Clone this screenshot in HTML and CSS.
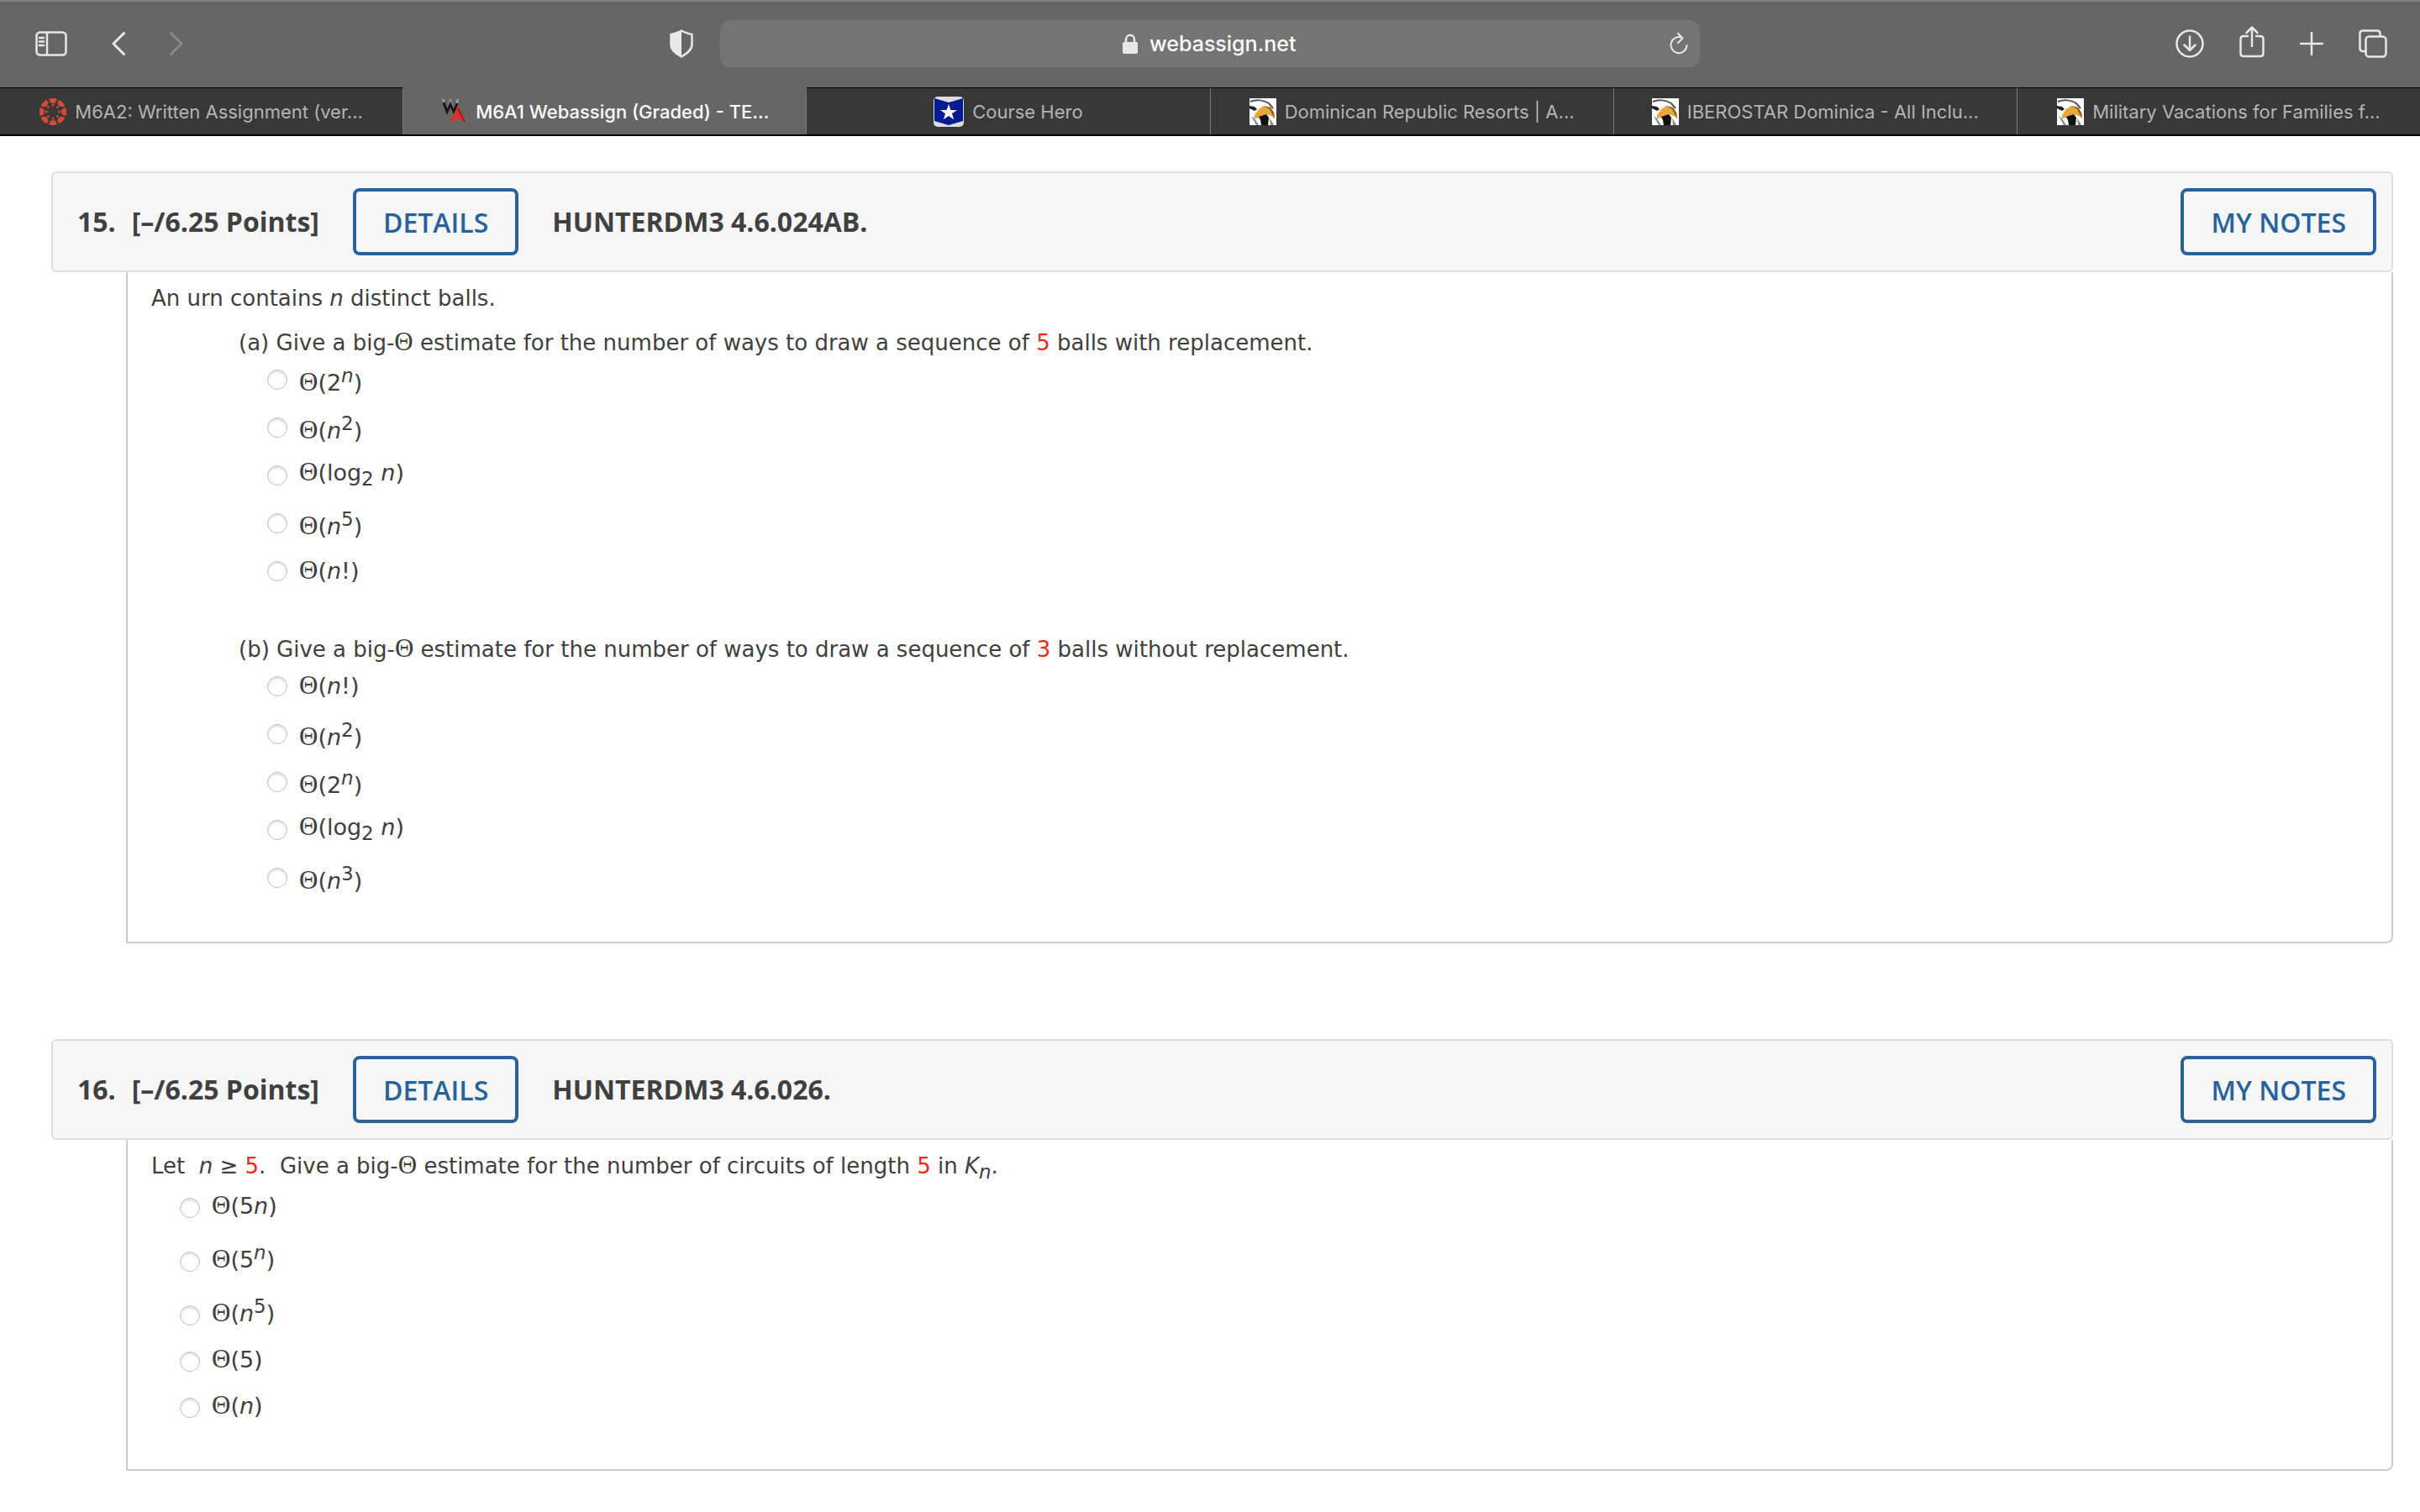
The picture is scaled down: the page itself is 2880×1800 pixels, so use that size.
FILE: index.html
```
<!DOCTYPE html>
<html lang="en">
<head>
    <meta charset="UTF-8">
    <meta name="viewport" content="width=device-width, initial-scale=1.0">
    <title>M6A1 Webassign (Graded)</title>
    <link rel="stylesheet" href="styles.css">
</head>
<body>
    <!-- Shared favicon for the three travel tabs -->
    <svg width="0" height="0" class="defs" aria-hidden="true">
        <symbol id="eagle" viewBox="0 0 32 32">
            <rect width="32" height="32" fill="#fff"/>
            <path d="M1 4C8 1 17 2 23 6L28 12" fill="none" stroke="#555" stroke-width="2"/>
            <path d="M0 9l6 1 3 3-3 2-6-3z" fill="#222"/>
            <path d="M6 20l5-7 6-4 8 2 4 6 1 7-4-3-6-2-8 4-6 1z" fill="#e9a63c"/>
            <path d="M17 9l8 2 4 6 1 7-3-5-3-6z" fill="#8a5f25"/>
            <path d="M11 22l9-3 3 4-1 9H14l-1-6z" fill="#111"/>
            <path d="M2 21l4 3 5 8H8zM24 24l3 4 2 4h-4z" fill="#8c8c8c"/>
        </symbol>
    </svg>

    <header class="browser">
        <div class="toolbar">
            <div class="tools tools-left">
                <button class="icon" aria-label="Sidebar">
                    <svg width="38" height="30" viewBox="0 0 38 30"><rect x="1.5" y="1.5" width="35" height="27" rx="4"/><path d="M14 2v26M5 8h5M5 12.500h5M5 17h5"/></svg>
                </button>
                <button class="icon" aria-label="Back">
                    <svg width="16" height="28" viewBox="0 0 16 28"><path d="M14.500 1.500L2 14l12.500 12.500" stroke-width="3"/></svg>
                </button>
                <button class="icon icon-off" aria-label="Forward" disabled>
                    <svg width="16" height="28" viewBox="0 0 16 28"><path d="M1.500 1.500L14 14 1.500 26.500"/></svg>
                </button>
                <button class="icon icon-shield" aria-label="Privacy report">
                    <svg width="28" height="34" viewBox="0 0 28 34"><path d="M14 1.500C18 4 22 5 26.500 6v12c0 6-5 10-12.500 14.500C6.500 28 1.500 24 1.500 18V6C6 5 10 4 14 1.500z"/><path class="solid" d="M14 1v32C6 29 1 24 1 18V6c5-1 9-2 13-5z"/></svg>
                </button>
            </div>
            <div class="address">
                <label class="url">
                    <svg width="18" height="24" viewBox="0 0 18 24"><rect class="solid" x="0" y="10" width="18" height="14" rx="2"/><path d="M4 11V7c0-7 10-7 10 0v4"/></svg>
                    <input type="text" value="webassign.net" aria-label="Address">
                </label>
                <button class="icon icon-reload" aria-label="Reload">
                    <svg width="22" height="26" viewBox="0 0 22 26"><path d="M15 6A9.500 9.500 0 1 0 20.500 15M10 1l5.500 5.500-5.500 5.500" stroke-width="2"/></svg>
                </button>
            </div>
            <div class="tools tools-right">
                <button class="icon" aria-label="Downloads">
                    <svg width="34" height="34" viewBox="0 0 34 34"><circle cx="17" cy="17" r="15.500"/><path d="M17 8.500v16M10.500 18.500l6.500 6.500 6.500-6.500"/></svg>
                </button>
                <button class="icon icon-share" aria-label="Share">
                    <svg width="30" height="38" viewBox="0 0 30 38"><path d="M10 12H5q-3.500 0-3.500 3.500v17Q1.500 36 5 36h20q3.500 0 3.500-3.500v-17Q28.500 12 25 12h-5M15 2v22M8.500 8L15 1.500 21.500 8"/></svg>
                </button>
                <button class="icon" aria-label="New tab">
                    <svg width="28" height="28" viewBox="0 0 28 28"><path d="M14 1v26M1 14h26"/></svg>
                </button>
                <button class="icon" aria-label="Tab overview">
                    <svg width="34" height="34" viewBox="0 0 34 34"><path d="M8.500 26H5q-3.500 0-3.500-3.500V5Q1.500 1.500 5 1.500h17q3.500 0 3.500 3.500v3"/><rect x="8.500" y="8.500" width="24" height="24" rx="4"/></svg>
                </button>
            </div>
        </div>

        <nav class="tabs">
            <a class="tab" href="#">
                <svg width="32" height="32" viewBox="-16 -16 32 32" fill="#d64b37">
                    <g id="dots"><path d="M-5-15.200Q0-17 5-15.200Q4-10 0-10T-5-15.200z"/><circle cy="-7.800" r="1.400"/></g>
                    <use href="#dots" transform="rotate(45)"/><use href="#dots" transform="rotate(90)"/>
                    <use href="#dots" transform="rotate(135)"/><use href="#dots" transform="rotate(180)"/>
                    <use href="#dots" transform="rotate(225)"/><use href="#dots" transform="rotate(270)"/>
                    <use href="#dots" transform="rotate(315)"/>
                </svg>
                <span>M6A2: Written Assignment (ver...</span>
            </a>
            <a class="tab tab-active" href="#">
                <svg width="32" height="32" viewBox="0 0 32 32" fill="none">
                    <path d="M3 1l5 14 4-12 4 12 5-14" stroke="#aaa" stroke-width="2"/>
                    <path d="M4 5l4 11 4-9 4 9 4-10" stroke="#161616" stroke-width="3"/>
                    <path d="M13 28l8-15 7 15M16 23h10" stroke="#d5322c" stroke-width="4"/>
                    <path d="M21 12l8 16" stroke="#8e1512" stroke-width="1.500"/>
                </svg>
                <span>M6A1 Webassign (Graded) - TE...</span>
            </a>
            <a class="tab" href="#">
                <svg width="36" height="36" viewBox="0 0 36 36">
                    <rect width="36" height="36" rx="5" fill="#dcdcdc"/>
                    <path d="M1 2l17 5 17-5v27l-17 5-17-5z" fill="#051b92"/>
                    <path d="M18 9l2.400 7H28l-6 4.300 2.200 7L18 23l-6.200 4.300 2.200-7L8 16h7.600z" fill="#fff"/>
                </svg>
                <span>Course Hero</span>
            </a>
            <a class="tab" href="#">
                <svg width="32" height="32"><use href="#eagle"/></svg>
                <span>Dominican Republic Resorts | A...</span>
            </a>
            <a class="tab" href="#">
                <svg width="32" height="32"><use href="#eagle"/></svg>
                <span>IBEROSTAR Dominica - All Inclu...</span>
            </a>
            <a class="tab" href="#">
                <svg width="32" height="32"><use href="#eagle"/></svg>
                <span>Military Vacations for Families f...</span>
            </a>
        </nav>
    </header>

    <main>
        <section class="question">
            <div class="question-header">
                <span class="number">15.</span>
                <span class="points">[–/6.25 Points]</span>
                <button class="btn">DETAILS</button>
                <h2>HUNTERDM3 4.6.024AB.</h2>
                <button class="btn btn-notes">MY NOTES</button>
            </div>
            <div class="question-body">
                <p>An urn contains <i>n</i> distinct balls.</p>
                <div class="part">
                    <p>(a) Give a big-<span class="theta">Θ</span> estimate for the number of ways to draw a sequence of <span class="red">5</span> balls with replacement.</p>
                    <div class="options">
                        <label><input type="radio" name="q15a"><span><span class="theta">Θ</span>(2<sup><i>n</i></sup>)</span></label>
                        <label><input type="radio" name="q15a"><span><span class="theta">Θ</span>(<i>n</i><sup>2</sup>)</span></label>
                        <label><input type="radio" name="q15a"><span><span class="theta">Θ</span>(log<sub>2</sub> <i>n</i>)</span></label>
                        <label><input type="radio" name="q15a"><span><span class="theta">Θ</span>(<i>n</i><sup>5</sup>)</span></label>
                        <label><input type="radio" name="q15a"><span><span class="theta">Θ</span>(<i>n</i>!)</span></label>
                    </div>
                </div>
                <div class="part">
                    <p>(b) Give a big-<span class="theta">Θ</span> estimate for the number of ways to draw a sequence of <span class="red">3</span> balls without replacement.</p>
                    <div class="options">
                        <label><input type="radio" name="q15b"><span><span class="theta">Θ</span>(<i>n</i>!)</span></label>
                        <label><input type="radio" name="q15b"><span><span class="theta">Θ</span>(<i>n</i><sup>2</sup>)</span></label>
                        <label><input type="radio" name="q15b"><span><span class="theta">Θ</span>(2<sup><i>n</i></sup>)</span></label>
                        <label><input type="radio" name="q15b"><span><span class="theta">Θ</span>(log<sub>2</sub> <i>n</i>)</span></label>
                        <label><input type="radio" name="q15b"><span><span class="theta">Θ</span>(<i>n</i><sup>3</sup>)</span></label>
                    </div>
                </div>
            </div>
        </section>

        <section class="question">
            <div class="question-header">
                <span class="number">16.</span>
                <span class="points">[–/6.25 Points]</span>
                <button class="btn">DETAILS</button>
                <h2>HUNTERDM3 4.6.026.</h2>
                <button class="btn btn-notes">MY NOTES</button>
            </div>
            <div class="question-body">
                <p>Let &nbsp;<i>n</i> ≥ <span class="red">5</span>. &nbsp;Give a big-<span class="theta">Θ</span> estimate for the number of circuits of length <span class="red">5</span> in <i>K<sub>n</sub></i>.</p>
                <div class="options options-inline">
                    <label><input type="radio" name="q16"><span class="theta">Θ</span>(5<i>n</i>)</label>
                    <label><input type="radio" name="q16"><span class="theta">Θ</span>(5<sup><i>n</i></sup>)</label>
                    <label><input type="radio" name="q16"><span class="theta">Θ</span>(<i>n</i><sup>5</sup>)</label>
                    <label><input type="radio" name="q16"><span class="theta">Θ</span>(5)</label>
                    <label><input type="radio" name="q16"><span class="theta">Θ</span>(<i>n</i>)</label>
                </div>
            </div>
        </section>
    </main>
</body>
</html>
```
FILE: styles.css
```
* {
    box-sizing: border-box;
}

body {
    margin: 0;
    background-color: #fff;
    color: #404040;
    font-family: Verdana, "DejaVu Sans", sans-serif;
    font-size: 26px;
    line-height: 30px;
}

.defs {
    position: absolute;
}

/* Browser chrome */
.browser {
    font-family: Inter, sans-serif;
    background-color: #666;
    border-top: 2px solid #818181;
}

.toolbar {
    display: grid;
    grid-template-columns: 1fr minmax(0, 1166px) 1fr;
    align-items: center;
    height: 102px;
    padding-bottom: 2px;
}

.tools {
    display: flex;
    align-items: center;
}

.tools-left {
    gap: 53px;
    padding-left: 42px;
}

.tools-right {
    gap: 42px;
    justify-content: flex-end;
    padding-right: 39px;
}

.icon {
    display: flex;
    padding: 0;
    border: none;
    background: none;
    color: #e8e8e8;
}

.icon-off {
    color: #8c8c8c;
}

.icon-shield {
    margin-left: auto;
    margin-right: 32px;
}

.icon-share {
    padding-bottom: 4px;
}

.icon svg,
.url svg {
    fill: none;
    stroke: currentColor;
    stroke-width: 2.5;
    stroke-linecap: round;
    stroke-linejoin: round;
}

.icon .solid,
.url .solid {
    fill: currentColor;
    stroke: none;
}

.address {
    display: grid;
    grid-template-columns: 1fr auto 1fr;
    align-items: center;
    height: 56px;
    border-radius: 12px;
    background-color: #747474;
}

.url {
    grid-column: 2;
    display: flex;
    align-items: center;
    gap: 14px;
    color: #e8e8e8;
}

.url input {
    width: 176px;
    padding: 0;
    border: none;
    background: none;
    color: #fff;
    font: 500 25px Inter, sans-serif;
}

.icon-reload {
    justify-self: end;
    margin-right: 14px;
}

.tabs {
    display: flex;
    height: 58px;
    border-bottom: 2px solid #000;
}

.tab {
    flex: 1;
    display: flex;
    align-items: center;
    justify-content: center;
    gap: 10px;
    border-top: 1px solid #000;
    border-right: 1px solid #777;
    background-color: #383838;
    color: #b4b4b4;
    font-size: 22px;
    text-decoration: none;
    white-space: nowrap;
}

.tab:last-child {
    border-right: none;
}

.tab-active {
    border-top-color: #666;
    background-color: #666;
    color: #fff;
    font-weight: 500;
}

/* Questions */
main {
    padding: 42px 32px 0 61px;
}

.question {
    margin-bottom: 114px;
}

.question:last-child {
    margin-bottom: 40px;
}

.question-header {
    display: flex;
    align-items: center;
    height: 120px;
    padding: 0 18px 0 29px;
    border: 2px solid #dedede;
    border-radius: 6px;
    background-color: #f6f6f6;
    font-family: "Open Sans", sans-serif;
    font-size: 32px;
    font-weight: 700;
}

.points {
    margin-left: 19px;
}

.question-header h2 {
    margin: 0;
    font-size: 32px;
}

.btn {
    height: 80px;
    margin: 0 40px;
    padding: 0 32px;
    border: 4px solid #28629a;
    border-radius: 8px;
    background: none;
    color: #28629a;
    font: 600 32px "Open Sans", sans-serif;
    cursor: pointer;
}

.btn-notes {
    margin: 0 0 0 auto;
}

.question-body {
    margin-left: 89px;
    padding: 16px 28px 48px;
    border: 2px solid #ccc;
    border-top: none;
    border-radius: 0 0 8px 0;
}

.question-body p {
    margin: 0;
}

.part {
    margin: 23px 0 0 104px;
}

.part + .part {
    margin-top: 50px;
}

.options {
    padding-left: 34px;
    font-size: 27px;
}

.options label {
    display: flex;
    align-items: center;
    gap: 14px;
    height: 57px;
}

.options-inline {
    padding-top: 14px;
    padding-bottom: 12px;
}

.options-inline label {
    display: block;
    height: auto;
}

.options-inline label + label {
    padding-top: 25px;
}

.options input {
    appearance: none;
    width: 24px;
    height: 24px;
    margin: 0;
    border: 1px solid #c0c0c0;
    border-radius: 50%;
    background-color: #fff;
    box-shadow: inset 0 2px 3px #ddd;
}

.options-inline input {
    margin-right: 14px;
    vertical-align: -5px;
}

.options input:checked {
    background-color: #28629a;
}

.theta {
    font-family: "Liberation Serif", serif;
    font-size: 31px;
    line-height: 0;
}

.red {
    color: #f02a1d;
}

sup,
sub {
    font-size: 23px;
}

sub {
    line-height: 1;
}
```
